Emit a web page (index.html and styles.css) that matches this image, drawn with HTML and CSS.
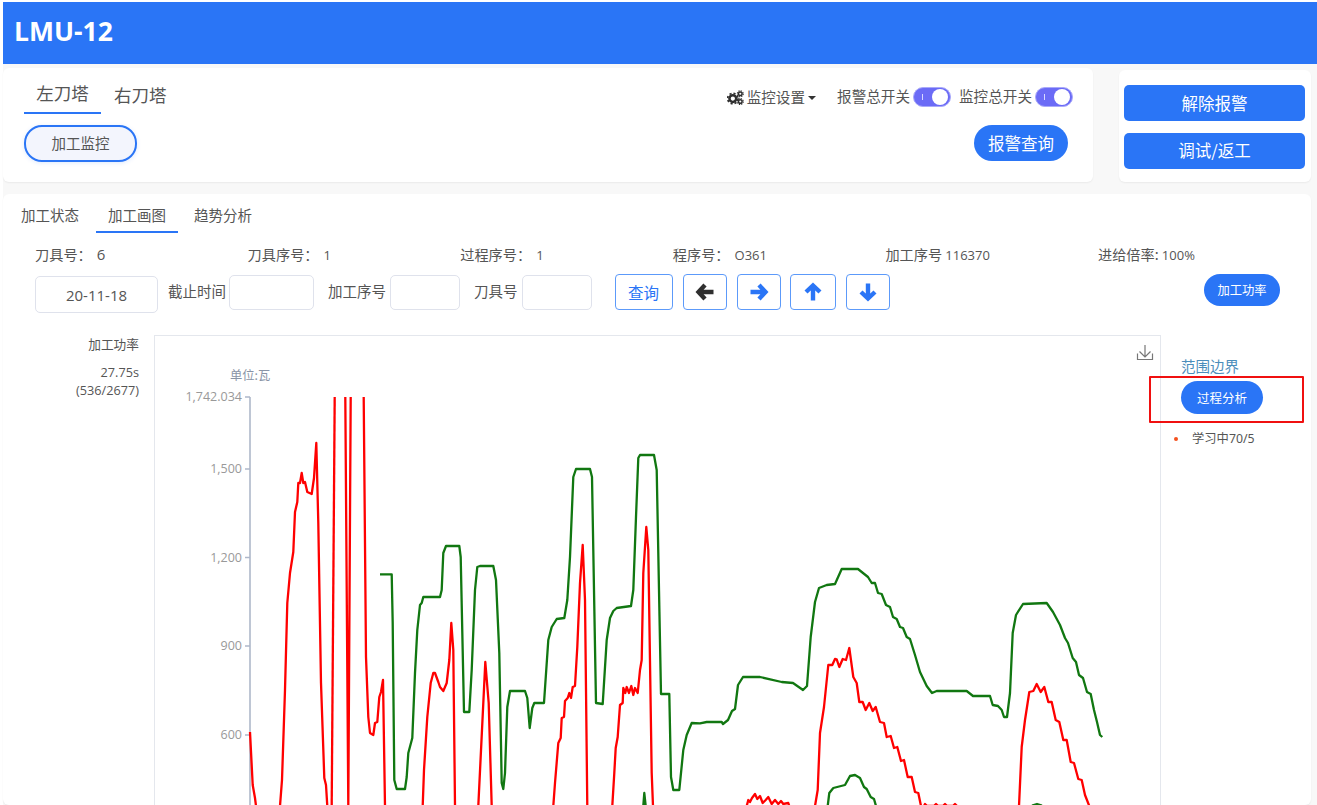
FILE: index.html
```html
<!DOCTYPE html>
<html lang="zh">
<head>
<meta charset="utf-8">
<title>LMU-12</title>
<link rel="stylesheet" href="styles.css">
</head>
<body>
<div class="page">
  <header class="topbar">LMU-12</header>
  <div class="top-row">
    <section class="card card-main">
      <div class="turret-col">
        <div class="turret-tabs">
          <span class="turret-tab active">左刀塔</span>
          <span class="turret-tab second">右刀塔</span>
        </div>
        <button class="pill-outline">加工监控</button>
      </div>
      <div class="control-col">
        <div class="switches">
          <span class="settings">
            <svg class="gears" viewBox="0 0 16 14" width="17" height="15"><circle cx="5.500" cy="8" r="3.200" fill="none" stroke="#2f2f2f" stroke-width="2.400"/><circle cx="5.500" cy="8" r="4.900" fill="none" stroke="#2f2f2f" stroke-width="1.600" stroke-dasharray="2 1.850"/><circle cx="12.500" cy="3.500" r="1.700" fill="none" stroke="#2f2f2f" stroke-width="1.400"/><circle cx="12.500" cy="3.500" r="2.800" fill="none" stroke="#2f2f2f" stroke-width="1" stroke-dasharray="1.200 1"/><circle cx="12.500" cy="10.800" r="1.700" fill="none" stroke="#2f2f2f" stroke-width="1.400"/><circle cx="12.500" cy="10.800" r="2.800" fill="none" stroke="#2f2f2f" stroke-width="1" stroke-dasharray="1.200 1"/></svg>
            <span class="settings-text">监控设置</span><i class="caret"></i>
          </span>
          <span class="switch-label first">报警总开关</span><span class="toggle"><i class="toggle-mark"></i><i class="toggle-knob"></i></span>
          <span class="switch-label">监控总开关</span><span class="toggle"><i class="toggle-mark"></i><i class="toggle-knob"></i></span>
        </div>
        <button class="pill-solid query-alarm">报警查询</button>
      </div>
    </section>
    <section class="card card-side">
      <button class="side-btn release">解除报警</button>
      <button class="side-btn">调试/返工</button>
    </section>
  </div>
  <section class="card card-work">
    <nav class="work-tabs">
      <span class="work-tab">加工状态</span>
      <span class="work-tab active">加工画图</span>
      <span class="work-tab">趋势分析</span>
    </nav>
    <div class="info-row">
      <span class="info-item">刀具号：<b class="val-big">6</b></span>
      <span class="info-item">刀具序号：<b class="val">1</b></span>
      <span class="info-item">过程序号：<b class="val">1</b></span>
      <span class="info-item">程序号：<b class="val">O361</b></span>
      <span class="info-item">加工序号 <b class="val tight">116370</b></span>
      <span class="info-item">进给倍率: <b class="val tight">100%</b></span>
    </div>
    <div class="form-row">
      <div class="input date">20-11-18</div>
      <label class="field-label l1">截止时间</label><div class="input w-end"></div>
      <label class="field-label l2">加工序号</label><div class="input w-seq"></div>
      <label class="field-label l2">刀具号</label><div class="input w-seq"></div>
      <button class="btn-line query">查询</button>
      <button class="btn-line arrow"><svg viewBox="0 0 20 18" width="20" height="18"><path d="M18.500 9H4M10 2 3.500 9l6.500 7" fill="none" stroke="#2f2f2f" stroke-width="4.400"/></svg></button>
      <button class="btn-line arrow"><svg viewBox="0 0 20 18" width="20" height="18"><path d="M1.500 9H16M10 2 16.500 9 10 16" fill="none" stroke="#2a75f6" stroke-width="4.400"/></svg></button>
      <button class="btn-line arrow wide"><svg viewBox="0 0 18 20" width="18" height="20"><path d="M9 18.500V4M2 10 9 3.500 16 10" fill="none" stroke="#2a75f6" stroke-width="4.400"/></svg></button>
      <button class="btn-line arrow"><svg viewBox="0 0 18 20" width="18" height="20"><path d="M9 1.500V16M2 10 9 16.500 16 10" fill="none" stroke="#2a75f6" stroke-width="4.400"/></svg></button>
      <button class="pill-solid power">加工功率</button>
    </div>
    <div class="chart-row">
      <aside class="chart-meta">
        <div class="meta-title">加工功率</div>
        <div class="meta-time">27.75s</div>
        <div class="meta-time">(536/2677)</div>
      </aside>
      <div class="chart-box">
        <svg class="chart" viewBox="154 335 1006 480" width="1006" height="480">
          <path d="M1137.500 353.500v6h15v-6M1145 345v12M1139.500 351.500l5.500 5.500 5.500-5.500" fill="none" stroke="#777" stroke-width="1.200"/>
          <text x="230" y="380" class="unit">单位:瓦</text>
          <path d="M250 397V815M245 397h5M245 469h5M245 557.500h5M245 646h5M245 735h5" fill="none" stroke="#aeb8ca" stroke-width="1.600"/>
          <g class="ylabels">
            <text x="242" y="401">1,742.034</text>
            <text x="242" y="473">1,500</text>
            <text x="242" y="562">1,200</text>
            <text x="242" y="650">900</text>
            <text x="242" y="739">600</text>
          </g>
          <g class="line green">
            <polyline points="380,574.300 391.700,574.300 392.700,623 394.300,780 396.700,789 405,789 406.700,777 408.300,753 412.300,738 415,673 417.300,630 420,605 421.700,603 423.300,597 440,597 441.700,590 443.300,553 446,546 459.300,546 460.700,557 464,712 469.300,712 471.700,670 475,590 477.300,567 480,566 493.300,566 496,580 499.300,653 501.700,783 503.300,789 505,773 507.300,707 510,691 525,691 527.300,698 529.700,728 532.300,708 534.300,703 544,703 548.300,640 551.700,627 556.700,619 564.300,618 567.300,600 570,557 573.300,477 576,469 590,469 592,477 596,703 602.700,704 606.700,640 610,618 613.300,611 616.700,608 631,606 633.300,590 636,517 638.300,458 640,455 654,455 656.700,470 661,694 669.300,694 671,777 673.300,790 679.300,790 683.300,750 686.700,735 691.700,723 700,723.300 706.700,722 721.700,722 723,724 728,720 732,711 735,709 738,685 743,677 760,677 781.700,682 793,683 803,690 807,686 810.700,637 815,602 819,588 826.700,585 835,584 841.700,569 858,569 868,577 871.700,583 875,583 878,593 881.700,594 886,605 890,607 893,617 896.700,619 900,627 903,628 906.700,637 910,639 915,655 920,672 926.700,686 932,693 936.700,691 966.700,691 973,696 990,696 992.700,705 998,706 1001.700,710 1004,717 1007,717 1010,693 1012.700,633 1016,615 1023,604 1046.700,603 1053,612 1060,625 1065,638 1068,643 1072.700,658 1076,662 1079,675 1083,678 1087,692 1090.700,694 1094,710 1097,722 1100,735 1102.300,737"/>
            <polyline points="643.300,806 644.300,793 645.700,806"/>
            <polyline points="827.700,806 829.300,793 833.300,788 845,785 850,776 855,775 860,778 864,787 866.700,789 870.700,797 874,799 876,806"/>
            <polyline points="1032,805.500 1037,804 1042,805.500"/>
          </g>
          <g class="line red">
            <polyline points="250,732 252.700,785 255,798 256,806"/>
            <polyline points="280,806 282,780 285,690 287.300,603 290,573 293.300,552 295,512 297.300,502 298.300,483 300,483 301.700,473 303.300,483 305,482 307.300,492 311.700,494 314,478 316.300,443 318.300,523 321,683 324.300,778 326,785 327.300,806"/>
            <polyline points="331.700,806 334.700,397"/>
            <polyline points="345.300,397 348.300,806 350.700,397"/>
            <polyline points="363.700,397 366,657 368.300,717 370,733 373.300,735 375,723 377.300,722 379.300,697 381,692 383,680 385,806"/>
            <polyline points="422.700,806 424,770 427.300,717 430.700,683 433.300,673 435,673 438.300,682 440,687 443.300,691 446.700,683 449.300,660 451.300,623 453.300,650 455,806"/>
            <polyline points="478.300,806 485.300,662 488.700,703 491.700,806"/>
            <polyline points="553.300,806 555,783 558.300,743 560.700,738 561.700,718 564,717 565,701 567.700,698 569.300,693 571,698 572.700,687 575,686 577.300,647 580,583 582.700,545 585,600 587.300,806"/>
            <polyline points="612.300,806 614.300,773 615.700,748 617.700,737 620,705 622.700,703 623.300,688 625.300,693 626.700,687 629,693 631.300,686 633.300,695 635,688 637.700,693 640,670 641.700,660 643.300,573 646.300,527 648.300,550 651.700,773 653,806"/>
            <polyline points="746.700,806 748.300,800 750,802 752,798 755,794 757.300,799 760,796 762.700,803 765.700,800 768.300,797 771.700,804 775,800 778.300,804 781,801 783.300,804 788.300,803 789.300,806"/>
            <polyline points="815,806 817.700,790 820,733 824,707 828.300,665 832.300,665 835,659 836.700,659.300 839.300,667 842.700,659 846,660 849.300,648 853.300,677 856.700,683 859.300,702 862.700,702 865.700,710 869.300,703 872.700,711 875.700,707 880,722 884,723 886.700,737 890.700,736 894,748 897.300,747 901,761 904,760 907.700,777 911.700,777 915,792 918.300,793 921,806"/>
            <polyline points="924,806 925,804 927,806 934,806 936,804 938,806 943,806 945,804 947,806 953,806 955,804 957,806"/>
            <polyline points="1019,806 1021.700,747 1025,720 1029.300,692 1033.300,691 1036.700,684 1040.700,692 1044.300,687 1048.300,702 1051.700,702 1055.700,720 1059.300,722 1063.300,740 1066.700,740 1070.700,762 1074,763 1078.300,779 1081.700,780 1085,795 1089.300,806"/>
          </g>
        </svg>
      </div>
      <aside class="chart-side">
        <a class="range-link">范围边界</a>
        <button class="pill-solid process">过程分析</button>
        <div class="legend"><i class="dot"></i><span>学习中70/5</span></div>
        <div class="mark-box"></div>
      </aside>
    </div>
  </section>
</div>
</body>
</html>
```

FILE: styles.css
```css
* { box-sizing: border-box; }
html, body { margin: 0; height: 100%; }
body {
  width: 1317px;
  height: 805px;
  overflow: hidden;
  background: #fff;
  font-family: "Noto Sans CJK SC", "Noto Sans", sans-serif;
  color: #555;
}
button { font-family: inherit; margin: 0; cursor: pointer; }
b { font-weight: 400; }
.page {
  margin: 2px 0 0 3px;
  width: 1314px;
  height: 803px;
  background: #f8f8f8;
  display: flex;
  flex-direction: column;
}
.topbar {
  height: 62px;
  flex: none;
  background: #2a75f6;
  color: #fff;
  font: 700 26.500px/58px "Open Sans", sans-serif;
  padding-left: 11px;
}
.top-row { display: flex; flex: none; padding-top: 4px; }
.card {
  background: #fff;
  border-radius: 6px;
  box-shadow: 0 1px 2px rgba(0, 0, 0, .06);
}
.card-main {
  width: 1090px;
  height: 114px;
  display: flex;
  justify-content: space-between;
}
.turret-col { padding: 10px 0 0 21px; }
.turret-tabs { display: flex; height: 36px; }
.turret-tab { font-size: 17.500px; line-height: 29px; color: #555; }
.turret-tab.active {
  width: 77px;
  height: 36px;
  text-align: center;
  border-bottom: 2px solid #2a75f6;
}
.turret-tab.second { margin: 2px 0 0 13px; }
.pill-outline {
  display: block;
  margin-top: 11px;
  width: 113px;
  height: 37px;
  border: 2px solid #2a75f6;
  border-radius: 18px;
  background: #f3f5fd;
  color: #555;
  font-size: 14.500px;
  padding: 0 0 3px;
  box-shadow: 0 1px 4px rgba(42, 117, 246, .15);
}
.control-col {
  width: 366px;
  position: relative;
  display: flex;
  flex-direction: column;
  align-items: flex-end;
  padding-right: 20px;
  padding-top: 18px;
}
.switches { display: flex; align-items: center; height: 21px; font-size: 14.600px; line-height: 21px; color: #555; white-space: nowrap; }
.settings { display: flex; align-items: center; margin-right: 21px; margin-top: 2px; }
.settings-text { margin-top: -2px; margin-left: -1px; }
.gears { margin-right: 4px; }
.caret {
  width: 0; height: 0;
  margin-left: 3px;
  border: 4px solid transparent;
  border-top: 4.500px solid #333;
  border-bottom: 0;
}
.switch-label { margin-left: 8px; margin-top: -3px; }
.switch-label.first { margin-left: 0; }
.toggle {
  position: relative;
  width: 38px;
  height: 20px;
  margin-left: 3px;
  border-radius: 10px;
  background: #6b6bf6;
  border: 1px solid #a9a9fa;
}
.toggle-mark { position: absolute; left: 8px; top: 6px; width: 1px; height: 6px; background: #d9d9ff; }
.toggle-knob { position: absolute; right: 2px; top: 1px; width: 16px; height: 16px; border-radius: 50%; background: #fff; }
.pill-solid {
  background: #2a75f6;
  color: #fff;
  border: 0;
  padding: 0;
}
.query-alarm {
  width: 94px;
  height: 36px;
  margin-top: 18px;
  margin-right: 5px;
  border-radius: 18px;
  font-size: 16.500px;
}
.card-side {
  width: 192px;
  height: 112px;
  margin: 2px 0 0 26px;
  padding: 15px 6px 0 5px;
}
.side-btn {
  display: block;
  width: 181px;
  height: 36px;
  margin-bottom: 12px;
  border: 0;
  border-radius: 5px;
  background: #2a75f6;
  color: #fff;
  font-size: 16.500px;
  padding: 0 0 2px;
}
.side-btn.release { padding: 0; }
.card-work {
  margin-top: 12px;
  width: 1308px;
  flex: 1;
  min-height: 0;
  overflow: hidden;
  padding-top: 10px;
}
.work-tabs { display: flex; height: 29px; font-size: 14.500px; line-height: 22px; color: #555; padding-left: 18px; }
.work-tab { margin-right: 15px; }
.work-tab.active {
  width: 82px;
  text-align: center;
  margin: 0 16px 0 2px;
  border-bottom: 2px solid #2a75f6;
}
.info-row {
  display: grid;
  grid-template-columns: repeat(6, 212.600px);
  padding: 10px 0 0 32px;
  height: 40px;
  font-size: 14.200px;
  line-height: 22px;
  color: #555;
}
.info-item { white-space: nowrap; }
.val { font: 13px "Open Sans", sans-serif; margin-left: 5px; }
.val.tight { margin-left: 0; }
.val-big { font: 15px "Open Sans", sans-serif; margin-left: 5px; }
.form-row { display: flex; align-items: flex-start; padding-left: 32px; height: 61px; margin-top: 2px; }
.input {
  height: 35px;
  background: #fff;
  border: 1px solid #dfe2ec;
  border-radius: 5px;
  flex: none;
}
.input.date {
  width: 123px;
  height: 37px;
  margin-top: 1px;
  text-align: center;
  font: 15px/37px "Open Sans", sans-serif;
  color: #555;
}
.w-end { width: 85px; }
.w-seq { width: 70px; }
.field-label { font-size: 14.500px; line-height: 32px; margin-left: 10px; margin-right: 3px; color: #555; white-space: nowrap; }
.field-label.l2 { margin-left: 14px; margin-right: 4px; }
.btn-line {
  height: 36px;
  margin-left: 10px;
  border: 1px solid #5c9afa;
  border-radius: 4px;
  background: #fff;
  color: #2a75f6;
  padding: 0;
  display: flex;
  align-items: center;
  justify-content: center;
  flex: none;
}
.btn-line.query { width: 58px; margin-left: 23px; font-size: 15.500px; margin-top: -1px; }
.btn-line.arrow { width: 44px; margin-top: -1px; }
.btn-line.arrow + .btn-line.arrow { margin-left: 10px; }
.btn-line.arrow + .btn-line.arrow.wide { width: 46px; margin-left: 9px; }
.power {
  width: 76px;
  height: 32px;
  border-radius: 16px;
  margin-left: auto;
  margin-right: 31px;
  font-size: 12.300px;
  margin-top: -1px;
}
.chart-row { display: flex; height: 480px; position: relative; margin-top: -1px; }
.chart-meta { width: 151px; flex: none; padding: 0 15px 0 0; text-align: right; font-size: 12.700px; color: #555; }
.meta-title { line-height: 18px; margin: 0 0 10px; }
.meta-time { line-height: 18px; font-family: "Open Sans", "Noto Sans CJK SC", sans-serif; }
.chart-box {
  width: 1007px;
  flex: none;
  height: 480px;
  background: #fff;
  border: 1px solid #e4e7ed;
  border-bottom: 0;
}
.chart { display: block; margin-left: -1px; margin-top: -1px; overflow: hidden; }
.unit { font-size: 12.300px; fill: #8a94a6; }
.ylabels text { font: 12.500px "Open Sans", sans-serif; fill: #999; text-anchor: end; }
.line polyline { fill: none; stroke-width: 2.300; stroke-linejoin: round; stroke-linecap: butt; }
.green polyline { stroke: #117711; }
.red polyline { stroke: #ff0000; }
.chart-side { position: relative; width: 150px; flex: none; padding: 20px 0 0 20px; }
.range-link { display: block; font-size: 14.500px; line-height: 22px; color: #4b8dbb; }
.process {
  display: block;
  width: 82px;
  height: 33px;
  border-radius: 17px;
  margin-top: 4px;
  font-size: 12.500px;
}
.legend { display: flex; align-items: center; margin: 16px 0 0 -7px; font-size: 12.300px; line-height: 18px; color: #555; font-family: "Noto Sans", "Noto Sans CJK SC", sans-serif; }
.dot { width: 4px; height: 4px; border-radius: 50%; background: #f4511e; margin-right: 14px; flex: none; }
.mark-box {
  position: absolute;
  left: -12px;
  top: 41px;
  width: 155px;
  height: 47px;
  border: 2px solid #f01010;
  border-radius: 1px;
}
```
